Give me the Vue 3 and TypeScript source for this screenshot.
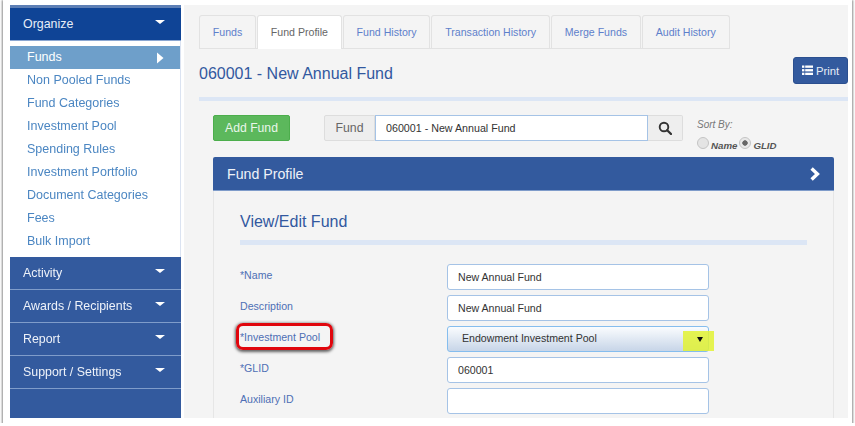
<script setup lang="ts">
const organize: string[] = ['Non Pooled Funds', 'Fund Categories', 'Investment Pool', 'Spending Rules', 'Investment Portfolio', 'Document Categories', 'Fees', 'Bulk Import']
const sections: string[] = ['Activity', 'Awards / Recipients', 'Report', 'Support / Settings']
const tabs: string[] = ['Funds', 'Fund Profile', 'Fund History', 'Transaction History', 'Merge Funds', 'Audit History']
</script>

<template>
  <div class="window">
    <aside class="sidebar">
      <div class="org-head"><span>Organize</span><i class="caret"></i></div>
      <nav class="org-list">
        <a class="item active"><span>Funds</span>
          <svg width="8" height="12" viewBox="0 0 8 12"><path d="M1 0.5 7.5 6 1 11.5z" fill="#fff" /></svg>
        </a>
        <a v-for="o in organize" :key="o" class="item">{{ o }}</a>
      </nav>
      <div v-for="s in sections" :key="s" class="section"><span>{{ s }}</span><i class="caret"></i></div>
      <div class="side-fill"></div>
    </aside>

    <main class="main">
      <ul class="tabs">
        <li v-for="t in tabs" :key="t" :class="['tab', { on: t === 'Fund Profile' }]">{{ t }}</li>
      </ul>
      <div class="title-row">
        <h1>060001 - New Annual Fund</h1>
        <button class="print">
          <svg width="11" height="11" viewBox="0 0 11 11" fill="#fff"><rect x="0" y="0.5" width="2.4" height="2.3" /><rect x="3.2" y="0.5" width="7.8" height="2.3" /><rect x="0" y="4.1" width="2.4" height="2.3" /><rect x="3.2" y="4.1" width="7.8" height="2.3" /><rect x="0" y="7.7" width="2.4" height="2.3" /><rect x="3.2" y="7.7" width="7.8" height="2.3" /></svg>
          Print
        </button>
      </div>
      <div class="rule top-rule"></div>

      <div class="tools">
        <button class="add">Add Fund</button>
        <div class="group">
          <span class="addon">Fund</span>
          <input class="search-input" value="060001 - New Annual Fund" readonly />
          <span class="search-btn">
            <svg width="14" height="14" viewBox="0 0 14 14" fill="none" stroke="#333" stroke-width="1.9"><circle cx="6" cy="6" r="4.3" /><path d="M9.2 9.2 13 13" stroke-linecap="round" stroke-width="2.3" /></svg>
          </span>
        </div>
        <div class="sort">
          <em>Sort By:</em>
          <div class="radios">
            <input type="radio" name="sort" /><b>Name</b>
            <input type="radio" name="sort" checked /><b>GLID</b>
          </div>
        </div>
      </div>

      <section class="panel">
        <header class="panel-head">
          <span>Fund Profile</span>
          <svg width="12" height="14" viewBox="0 0 12 14"><path d="M2.6 1.6 8.4 7l-5.8 5.4" fill="none" stroke="#fff" stroke-width="3.4" /></svg>
        </header>
        <div class="panel-body">
          <h2>View/Edit Fund</h2>
          <div class="rule inner-rule"></div>
          <div class="form">
            <label>*Name</label>
            <input class="field" value="New Annual Fund" readonly />
            <label>Description</label>
            <input class="field" value="New Annual Fund" readonly />
            <label class="marked">*Investment Pool<span class="redbox"></span></label>
            <div class="select">
              <span>Endowment Investment Pool</span>
              <span class="hl"></span>
              <i class="arrow"></i>
            </div>
            <label>*GLID</label>
            <input class="field" value="060001" readonly />
            <label>Auxiliary ID</label>
            <input class="field" value="" readonly />
          </div>
        </div>
      </section>
    </main>
  </div>
</template>

<style>
html, body { margin: 0; background: #fff; overflow: hidden; }
</style>

<style scoped>
* { box-sizing: border-box; }
.window {
  width: 849px; height: 423px; margin-left: 3px;
  padding: 5px 4px 5px 7px;
  background: #fff;
  box-shadow: 0 1px 2px 1px rgba(0, 0, 0, .45);
  display: flex; gap: 3px;
  font-family: "Liberation Sans", Arial, sans-serif;
  overflow: hidden;
  filter: blur(.4px);
}
.sidebar { width: 171px; display: flex; flex-direction: column; border-right: 1px solid #dbe3f1; flex: none; }
.org-head {
  height: 36px; background: #0f4496; border-top: 3px solid #5d7fb5; border-bottom: 1px solid #8ba7d2;
  color: #e8eef8; font-size: 12.4px; padding: 0 13px; display: flex; justify-content: space-between; align-items: center;
  margin-right: -1px;
}
.caret { width: 0; height: 0; border: 5px solid transparent; border-top: 4px solid #fff; border-bottom: 0; margin: 0 3px 5px 0; }
.org-list { display: flex; flex-direction: column; padding: 5px 0 0; background: #fff; height: 216px; }
.item { flex: none; height: 23px; line-height: 23px; padding: 0 16px 0 17px; font-size: 12.5px; color: #4b86c2; display: flex; justify-content: space-between; align-items: center; }
.item.active { background: #6e9fca; color: #fff; }
.section {
  height: 33px; background: #335a9e; border-bottom: 1px solid #7f9cca; color: #eef2f9;
  font-size: 12.4px; padding: 0 13px; display: flex; justify-content: space-between; align-items: center;
  margin-right: -1px;
}
.side-fill { flex: 1; background: #335a9e; margin-right: -1px; }

.main { width: 664px; background: #f4f4f4; padding: 10px 0 0 15px; flex: none; overflow: hidden; position: relative; }
.tabs { list-style: none; margin: 0; padding: 0; display: flex; gap: 1px; width: 530px; height: 34px; border-bottom: 1px solid #e2e2e2; }
.tab {
  padding: 0 12.8px; height: 34px; line-height: 32px; font-size: 10.6px; color: #5e7fcb; text-align: center;
  border: 1px solid #e2e2e2; border-bottom: 0; border-radius: 3px 3px 0 0; white-space: nowrap;
}
.tab.on { background: #fff; color: #666; }
.title-row { display: flex; justify-content: space-between; height: 48px; }
h1 { margin: 15px 0 0; font-size: 16px; font-weight: 400; line-height: 20px; color: #32589f; }
.print {
  width: 55px; height: 27px; margin-top: 8px; background: #335a9e; border: 1px solid #2b4f8f; border-radius: 3px;
  color: #e6ecf6; font: 11.3px "Liberation Sans", Arial, sans-serif; display: flex; align-items: center; justify-content: center; gap: 3px; padding: 0;
}
.rule { height: 4px; background: #dce6f5; }
.tools { display: flex; margin: 14px 0 0 14px; height: 26px; }
.add {
  width: 77px; height: 26px; background: #5cb85c; border: 1px solid #4cae4c; border-radius: 2px; color: #eaf6ea;
  font: 12.2px "Liberation Sans", Arial, sans-serif; padding: 0;
}
.group { display: flex; margin-left: 34px; height: 26px; width: 359px; }
.addon { width: 51px; background: #eee; border: 1px solid #ddd; color: #666; font-size: 12.3px; line-height: 25px; text-align: center; border-radius: 2px 0 0 2px; }
.search-input { width: 273px; height: 26px; border: 1px solid #a5c3e6; background: #fff; font: 10.7px "Liberation Sans", Arial, sans-serif; color: #333; padding: 0 0 0 10px; outline: 0; }
.search-btn { width: 35px; background: #eee; border: 1px solid #ddd; border-left: 0; border-radius: 0 2px 2px 0; display: flex; align-items: center; justify-content: center; }
.sort { margin-left: 14px; font-size: 10px; color: #777; margin-top: 4px; }
.sort em { display: block; line-height: 12px; }
.radios { display: flex; align-items: center; margin-top: 7px; height: 12px; }
.radios b { font-style: italic; color: #555; font-size: 9.7px; margin: 2px 2px 0 2px; }
.radios input {
  appearance: none; margin: 0; width: 12px; height: 12px; border-radius: 50%; border: 1px solid #c4c4c4;
  background: #e4e4e4; margin-top: -3px;
}
.radios input:checked { background: radial-gradient(circle, #666 0 2.4px, #e8e8e8 3px); }

.panel { margin: 16px 0 0 14px; width: 621px; }
.panel-head {
  height: 34px; background: #335a9e; border-radius: 2px 2px 0 0; border-bottom: 1px solid #7f9cca; color: #eef2f9; font-size: 14.2px;
  display: flex; align-items: center; justify-content: space-between; padding: 0 13px 0 14px;
}
.panel-body { border: 1px solid #e6e6e6; border-width: 0 1px; padding: 20px 26px 0; height: 240px; }
h2 { margin: 0; font-size: 16px; font-weight: 400; line-height: 22px; color: #32589f; }
.inner-rule { margin: 7px 0 0; height: 5px; }
.form { display: grid; grid-template-columns: 207px 262px; grid-auto-rows: 26px; row-gap: 5px; margin-top: 19px; }
label { font-size: 10.6px; color: #4e6fb5; line-height: 23px; position: relative; }
.field { height: 26px; width: 262px; border: 1px solid #a5c3e6; border-radius: 3px; background: #fff; padding: 0 0 0 10px; font: 10.6px "Liberation Sans", Arial, sans-serif; color: #333; outline: 0; }
.select {
  position: relative; height: 26px; border: 1px solid #85bdee; border-radius: 3px;
  background: linear-gradient(#fafcfe, #c7d5e8); font-size: 10.6px; color: #333; line-height: 23px; padding-left: 14px;
}
.hl { position: absolute; right: -6px; top: 4px; width: 31px; height: 20px; background: rgba(226, 242, 50, .85); }
.arrow { position: absolute; right: 5px; top: 10px; width: 0; height: 0; border: 3px solid transparent; border-top: 5px solid #111; border-bottom: 0; }
.redbox {
  position: absolute; left: -4px; top: -3px; width: 97px; height: 27px; border: 3px solid #e0060d; border-radius: 7px;
  box-shadow: 0 1px 3px 1px rgba(0, 0, 0, .6);
}
</style>
